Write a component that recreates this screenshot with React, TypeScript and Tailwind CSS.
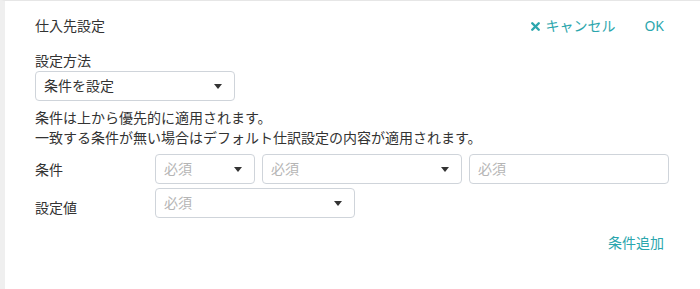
import { X } from 'lucide-react'

const teal = 'text-[#2ba6ad]'

function Caret() {
  return (
    <svg width="8" height="5" viewBox="0 0 8 5" className="shrink-0" aria-hidden>
      <path d="M0 0h8L4 5z" fill="#333" />
    </svg>
  )
}

function SelectBox({ value, placeholder, className }: { value?: string; placeholder?: string; className: string }) {
  return (
    <div className={`flex h-[30px] items-center justify-between rounded-[4px] border border-[#cfd4da] bg-white pl-2 pr-[12px] ${className}`}>
      <span className={value ? 'text-[#333]' : 'text-[#b5b5b5]'}>{value ?? placeholder}</span>
      <Caret />
    </div>
  )
}

function TextBox({ placeholder, className }: { placeholder: string; className: string }) {
  return (
    <div className={`flex h-[30px] items-center rounded-[4px] border border-[#cfd4da] bg-white px-2 ${className}`}>
      <span className="text-[#b5b5b5]">{placeholder}</span>
    </div>
  )
}

export default function App() {
  return (
    <div
      className="h-[289px] w-[700px] border-l-[5px] border-t border-l-[#efefef] border-t-[#e6e6e6] bg-white pl-[30px] pr-[32px] text-[14px] leading-[20px] text-[#333]"
      style={{ fontFamily: '"Noto Sans", "Noto Sans CJK JP", sans-serif' }}
    >
      {/* header */}
      <div className="flex items-center justify-between pt-[15px]">
        <h1 className="font-normal">仕入先設定</h1>
        <div className={`flex items-center gap-[29px] ${teal}`}>
          <button className="flex items-center gap-[3px]">
            <X size={13} strokeWidth={4.5} />
            <span>キャンセル</span>
          </button>
          <button className="pr-[4px]">OK</button>
        </div>
      </div>

      {/* method */}
      <div className="mt-[15px]">設定方法</div>
      <SelectBox value="条件を設定" className="w-[200px]" />

      <p className="mt-[7px]">条件は上から優先的に適用されます。</p>
      <p>一致する条件が無い場合はデフォルト仕訳設定の内容が適用されます。</p>

      {/* conditions */}
      <div className="mt-[6px] flex items-start">
        <div className="w-[120px] shrink-0 pt-[6px]">条件</div>
        <div className="flex gap-[7px]">
          <SelectBox placeholder="必須" className="w-[100px]" />
          <SelectBox placeholder="必須" className="w-[200px]" />
          <TextBox placeholder="必須" className="w-[200px]" />
        </div>
      </div>
      <div className="mt-[4px] flex items-start">
        <div className="w-[120px] shrink-0 pt-[10px]">設定値</div>
        <SelectBox placeholder="必須" className="w-[200px]" />
      </div>

      <div className="mt-[15px] flex justify-end pr-[4px]">
        <button className={teal}>条件追加</button>
      </div>
    </div>
  )
}
